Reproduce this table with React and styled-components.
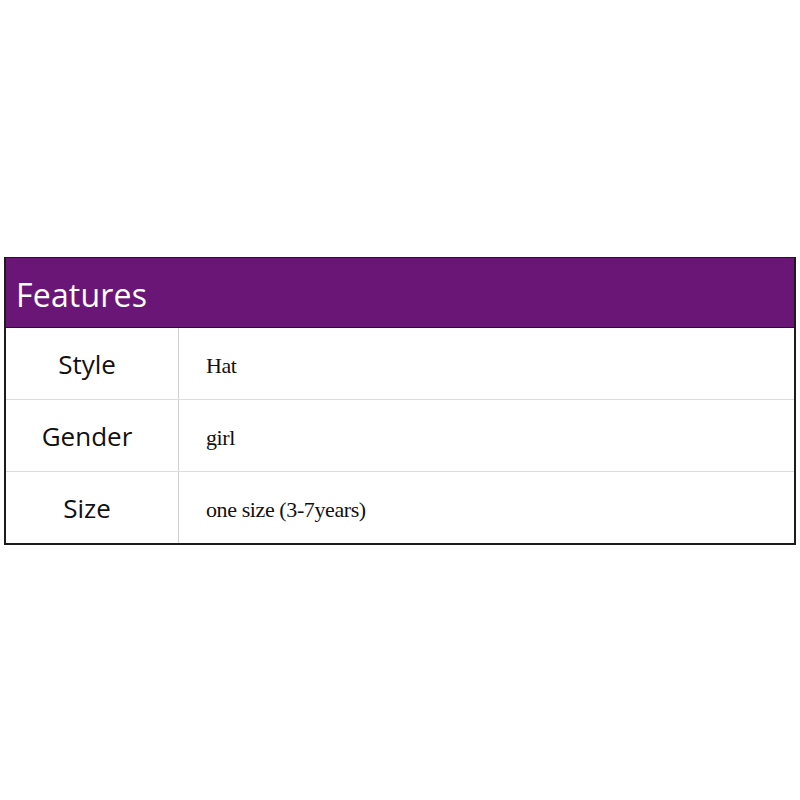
import React from 'react';
import styled, { createGlobalStyle } from 'styled-components';

const GlobalStyle = createGlobalStyle`
    html, body {
        margin: 0;
        padding: 0;
        background: #ffffff;
    }
`;

const Page = styled.div`
    width: 800px;
    height: 800px;
    padding: 257px 4px 0 4px;
    box-sizing: border-box;
`;

const Table = styled.div`
    border: 2px solid #1c1c1c;
    border-top-width: 1px;
    width: 792px;
    box-sizing: border-box;
`;

const Header = styled.div`
    height: 70px;
    background-color: #6a1677;
    border-bottom: 1px solid #2a0630;
    display: flex;
    align-items: center;
    padding-left: 10px;
    padding-top: 4px;
    box-sizing: border-box;
    font-family: 'Open Sans', sans-serif;
    font-size: 32px;
    letter-spacing: 0.2px;
    color: #ffffff;
`;

const Row = styled.div`
    display: grid;
    grid-template-columns: 173px 1fr;
    height: 71px;
    border-top: ${(p) => (p.first ? 'none' : '1px solid #dcdcdc')};
`;

const Label = styled.div`
    display: flex;
    align-items: center;
    justify-content: center;
    padding-right: 10px;
    border-right: 1px solid #d0d0d0;
    font-family: 'Open Sans', sans-serif;
    font-size: 26px;
    color: #111111;
`;

const Value = styled.div`
    display: flex;
    align-items: center;
    padding-left: 27px;
    padding-top: 4px;
    font-family: 'Liberation Serif', serif;
    font-size: 22px;
    letter-spacing: -0.4px;
    color: #111111;
`;

const rows = [
    { label: 'Style', value: 'Hat' },
    { label: 'Gender', value: 'girl' },
    { label: 'Size', value: 'one size (3-7years)' },
];

const App = () => (
    <Page>
        <GlobalStyle />
        <Table>
            <Header>Features</Header>
            {rows.map((row, i) => (
                <Row key={row.label} first={i === 0}>
                    <Label>{row.label}</Label>
                    <Value>{row.value}</Value>
                </Row>
            ))}
        </Table>
    </Page>
);

export default App;
